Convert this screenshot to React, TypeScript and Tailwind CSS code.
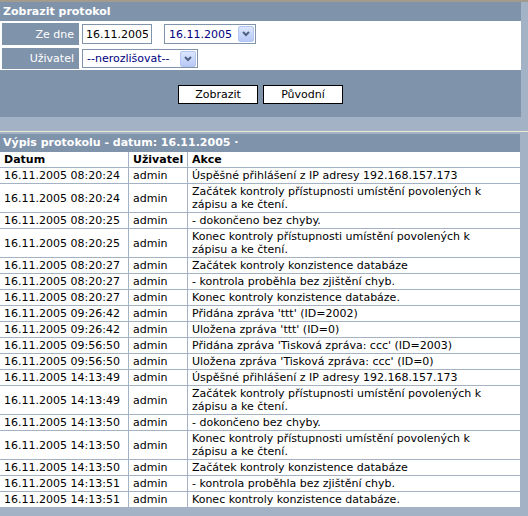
const rows: [string, string, string[]][] = [
  ["16.11.2005 08:20:24", "admin", ["Úspěšné přihlášení z IP adresy 192.168.157.173"]],
  ["16.11.2005 08:20:24", "admin", ["Začátek kontroly přístupnosti umístění povolených k", "zápisu a ke čtení."]],
  ["16.11.2005 08:20:25", "admin", ["- dokončeno bez chyby."]],
  ["16.11.2005 08:20:25", "admin", ["Konec kontroly přístupnosti umístění povolených k", "zápisu a ke čtení."]],
  ["16.11.2005 08:20:27", "admin", ["Začátek kontroly konzistence databáze"]],
  ["16.11.2005 08:20:27", "admin", ["- kontrola proběhla bez zjištění chyb."]],
  ["16.11.2005 08:20:27", "admin", ["Konec kontroly konzistence databáze."]],
  ["16.11.2005 09:26:42", "admin", ["Přidána zpráva 'ttt' (ID=2002)"]],
  ["16.11.2005 09:26:42", "admin", ["Uložena zpráva 'ttt' (ID=0)"]],
  ["16.11.2005 09:56:50", "admin", ["Přidána zpráva 'Tisková zpráva: ccc' (ID=2003)"]],
  ["16.11.2005 09:56:50", "admin", ["Uložena zpráva 'Tisková zpráva: ccc' (ID=0)"]],
  ["16.11.2005 14:13:49", "admin", ["Úspěšné přihlášení z IP adresy 192.168.157.173"]],
  ["16.11.2005 14:13:49", "admin", ["Začátek kontroly přístupnosti umístění povolených k", "zápisu a ke čtení."]],
  ["16.11.2005 14:13:50", "admin", ["- dokončeno bez chyby."]],
  ["16.11.2005 14:13:50", "admin", ["Konec kontroly přístupnosti umístění povolených k", "zápisu a ke čtení."]],
  ["16.11.2005 14:13:50", "admin", ["Začátek kontroly konzistence databáze"]],
  ["16.11.2005 14:13:51", "admin", ["- kontrola proběhla bez zjištění chyb."]],
  ["16.11.2005 14:13:51", "admin", ["Konec kontroly konzistence databáze."]],
];

function DropButton() {
  return (
    <span className="flex h-[16px] w-[16px] items-center justify-center rounded-[2px] border border-[#b4c6f2] bg-gradient-to-b from-[#dce6fe] to-[#b6c9f6]">
      <svg width="8" height="6" viewBox="0 0 8 6">
        <path d="M1 1 L4 4 L7 1" fill="none" stroke="#4d6185" strokeWidth="2" />
      </svg>
    </span>
  );
}

function Select({ value, width, height }: { value: string; width: string; height: string }) {
  return (
    <div className={`flex items-center justify-between border border-[#7f93ab] bg-white pl-[4px] pr-[1px] text-[#000080] ${width} ${height}`}>
      <span className="whitespace-nowrap">{value}</span>
      <DropButton />
    </div>
  );
}

const cell = "flex items-center border-b border-[#a3b2c4] py-[1px] pl-[4px] pr-[2px] whitespace-nowrap overflow-hidden";

export default function App() {
  return (
    <div className="h-[516px] w-[528px] overflow-hidden bg-[#a3b2c4] font-['DejaVu_Sans',Verdana,sans-serif] text-[11px] leading-[13px] text-black">
      <div className="h-[2px] bg-[#a39c8e]" />

      <div className="w-[521px] bg-[#7f93ab]">
        <div className="h-[19px] pl-[3px] pt-[3px] font-bold text-white">Zobrazit protokol</div>
        <div className="flex flex-col gap-[3px] bg-white pb-[1px] pt-[2px]">
          <div className="flex h-[22px]">
            <div className="ml-[2px] flex w-[77px] items-center justify-end bg-[#7f93ab] pr-[5px] text-white">Ze dne</div>
            <div className="ml-[3px] flex items-center gap-[12px]">
              <input
                readOnly
                defaultValue="16.11.2005"
                className="h-[20px] w-[70px] border border-[#7f93ab] bg-white px-[3px] text-black outline-none"
              />
              <Select value="16.11.2005" width="w-[92px]" height="h-[20px]" />
            </div>
          </div>
          <div className="flex h-[21px]">
            <div className="ml-[2px] flex w-[77px] items-center justify-end bg-[#7f93ab] pr-[5px] text-white">Uživatel</div>
            <div className="ml-[3px] flex items-center">
              <Select value="--nerozlišovat--" width="w-[116px]" height="h-[19px]" />
            </div>
          </div>
        </div>
        <div className="flex h-[47px] justify-center gap-[5px] pt-[15px]">
          <button className="h-[19px] w-[80px] border border-black bg-white text-black">Zobrazit</button>
          <button className="h-[19px] w-[80px] border border-black bg-white text-black">Původní</button>
        </div>
      </div>

      <div className="h-[14px]" />
      <div className="h-[1px] bg-[#ece8d6]" />
      <div className="h-[2px]" />

      <div className="w-[520px]">
        <div className="h-[18px] bg-[#7f93ab] pl-[3px] pt-[2px] font-bold text-white">
          Výpis protokolu - datum: 16.11.2005 ·
        </div>
        <div className="grid grid-cols-[129px_59px_1fr] bg-white">
          <div className={`${cell} border-r font-bold`}>Datum</div>
          <div className={`${cell} border-r pl-[3px] font-bold`}>Uživatel</div>
          <div className={`${cell} font-bold`}>Akce</div>
          {rows.map(([date, user, lines], i) => (
            <div key={i} className="contents">
              <div className={`${cell} border-r`}>{date}</div>
              <div className={`${cell} border-r`}>{user}</div>
              <div className={cell}>
                <span>
                  {lines.map((l, j) => (
                    <span key={j} className="block">{l}</span>
                  ))}
                </span>
              </div>
            </div>
          ))}
        </div>
      </div>
    </div>
  );
}
